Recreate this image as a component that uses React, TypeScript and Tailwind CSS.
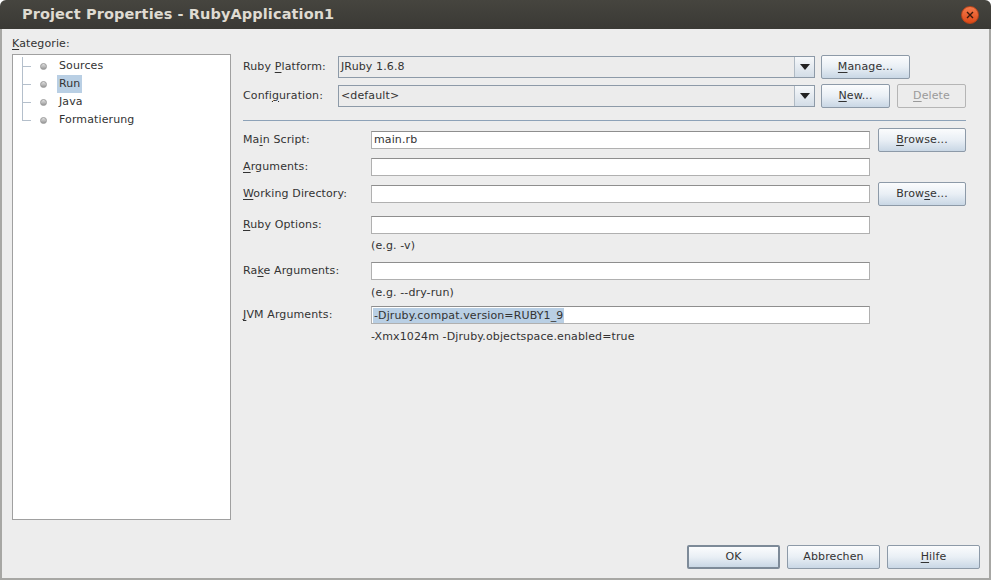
import React from "react";

const font = { fontFamily: '"DejaVu Sans", sans-serif', letterSpacing: "0.12px" };

function U({ children }: { children: React.ReactNode }) {
  return <span className="underline underline-offset-2">{children}</span>;
}

function Btn({ children, w, def, disabled }: { children: React.ReactNode; w: string; def?: boolean; disabled?: boolean }) {
  const base = "h-[24px] flex items-center justify-center text-[11px] rounded-[2px] shrink-0";
  if (disabled)
    return <div className={`${base} ${w} border border-[#b5b5b5] bg-[#ececec] text-[#9a9a9a]`}>{children}</div>;
  return (
    <div
      className={`${base} ${w} ${def ? "border-2 border-[#7d8a98]" : "border border-[#8d9aa8]"} bg-gradient-to-b from-[#fbfcfd] via-[#e9eff5] to-[#c9d7e5] text-[#333]`}
    >
      {children}
    </div>
  );
}

function Combo({ text }: { text: string }) {
  return (
    <div className="w-[477px] h-[22px] border border-[#8d9aa8] bg-[#ececec] flex items-center">
      <div className="flex-1 pl-[2px] text-[11px] text-[#333]">{text}</div>
      <div className="w-[20px] h-full border-l border-[#b0bac4] bg-gradient-to-b from-[#f6f8fa] to-[#d3dde7] flex items-center justify-center">
        <svg width="10" height="6" viewBox="0 0 10 6"><path d="M0 0 H10 L5 6 Z" fill="#222" /></svg>
      </div>
    </div>
  );
}

function Field({ value, selected }: { value?: string; selected?: boolean }) {
  return (
    <div className="w-[499px] h-[18px] bg-white border border-[#b0b0b0] border-t-[#8e8e8e] flex items-center text-[11px] text-[#333] pl-[1px]">
      {value && (selected ? <span className="bg-[#b9cfe4] leading-[15px] px-[1px]">{value}</span> : <span className="pl-[1px]">{value}</span>)}
    </div>
  );
}

function Row({ label, mt, children, browse }: { label: React.ReactNode; mt: string; children: React.ReactNode; browse?: React.ReactNode }) {
  return (
    <div className={`flex items-center h-[24px] ${mt}`}>
      <div className="w-[128px] text-[11px] text-[#333]">{label}</div>
      {children}
      {browse && <div className="ml-[8px]">{browse}</div>}
    </div>
  );
}

function Hint({ text, mt }: { text: string; mt: string }) {
  return <div className={`h-[18px] flex items-center pl-[128px] text-[11px] text-[#333] ${mt}`}>{text}</div>;
}

function TreeItem({ text, selected, last }: { text: string; selected?: boolean; last?: boolean }) {
  return (
    <div className="relative h-[18px] flex items-center">
      <div className={`absolute left-[8px] top-0 w-[1px] bg-[#b4bfcb] ${last ? "h-[9px]" : "h-[18px]"}`} />
      <div className="absolute left-[8px] top-[9px] w-[9px] h-[1px] bg-[#b4bfcb]" />
      <div className="ml-[26px] w-[7px] h-[7px] rounded-full bg-gradient-to-b from-[#e0e0e0] to-[#9a9a9a] border border-[#999]" />
      <div className={`ml-[10px] text-[11px] text-[#333] px-[2px] leading-[18px] ${selected ? "bg-[#b9cfe4]" : ""}`}>{text}</div>
    </div>
  );
}

export default function App() {
  return (
    <div className="w-[991px] h-[580px] bg-white overflow-hidden" style={font}>
      <div className="h-[29px] bg-gradient-to-b from-[#46453f] to-[#3a3935] rounded-t-[6px] flex items-center justify-between px-[22px]">
        <div className="text-[14.5px] font-bold text-[#dfdbd2] tracking-[0.1px]">Project Properties - RubyApplication1</div>
        <div className="w-[18px] h-[18px] rounded-full bg-gradient-to-b from-[#f47a4a] to-[#dd4814] flex items-center justify-center mr-[-10px] border border-[#b8441a]">
          <svg width="8" height="8" viewBox="0 0 8 8"><path d="M1 1 L7 7 M7 1 L1 7" stroke="#3a1a0c" strokeWidth="1.4" /></svg>
        </div>
      </div>
      <div className="h-[551px] bg-[#ededed] border-l-2 border-r-2 border-b-2 border-[#a7a7a4] flex flex-col">
        <div className="flex flex-1">
          <div className="pl-[10px] w-[231px] shrink-0">
            <div className="mt-[8px] h-[14px] flex items-center text-[11px] text-[#333]"><span><U>K</U>ategorie:</span></div>
            <div className="mt-[3px] w-[219px] h-[466px] bg-white border border-[#a0a0a0] pt-[2px] pl-[1px]">
              <TreeItem text="Sources" />
              <TreeItem text="Run" selected />
              <TreeItem text="Java" />
              <TreeItem text="Formatierung" last />
            </div>
          </div>
          <div className="ml-[10px] w-[723px] flex flex-col">
            <div className="flex items-center h-[24px] mt-[26px]">
              <div className="w-[95px] text-[11px] text-[#333]">Ruby <U>P</U>latform:</div>
              <Combo text="JRuby 1.6.8" />
              <div className="ml-[6px]"><Btn w="w-[89px]"><span><U>M</U>anage...</span></Btn></div>
            </div>
            <div className="flex items-center h-[24px] mt-[5px]">
              <div className="w-[95px] text-[11px] text-[#333]">Confi<U>g</U>uration:</div>
              <Combo text="<default>" />
              <div className="ml-[6px]"><Btn w="w-[69px]"><span><U>N</U>ew...</span></Btn></div>
              <div className="ml-[7px]"><Btn w="w-[69px]" disabled><span><U>D</U>elete</span></Btn></div>
            </div>
            <div className="mt-[12px] h-[1px] w-[723px] bg-[#8da2b8]" />
            <Row mt="mt-[7px]" label={<span>Ma<U>i</U>n Script:</span>} browse={<Btn w="w-[88px]"><span><U>B</U>rowse...</span></Btn>}>
              <Field value="main.rb" />
            </Row>
            <Row mt="mt-[3px]" label={<span><U>A</U>rguments:</span>}>
              <Field />
            </Row>
            <Row mt="mt-[3px]" label={<span><U>W</U>orking Directory:</span>} browse={<Btn w="w-[88px]"><span>Brow<U>s</U>e...</span></Btn>}>
              <Field />
            </Row>
            <Row mt="mt-[7px]" label={<span><U>R</U>uby Options:</span>}>
              <Field />
            </Row>
            <Hint mt="mt-[0px]" text="(e.g. -v)" />
            <Row mt="mt-[4px]" label={<span>Ra<U>k</U>e Arguments:</span>}>
              <Field />
            </Row>
            <Hint mt="mt-[1px]" text="(e.g. --dry-run)" />
            <Row mt="mt-[1px]" label={<span><U>J</U>VM Arguments:</span>}>
              <Field value="-Djruby.compat.version=RUBY1_9" selected />
            </Row>
            <Hint mt="mt-[1px]" text="-Xmx1024m -Djruby.objectspace.enabled=true" />
          </div>
        </div>
        <div className="flex justify-end gap-[7px] pr-[9px] pb-[7px] h-[33px] items-start">
          <Btn w="w-[93px]" def>OK</Btn>
          <Btn w="w-[93px]">Abbrechen</Btn>
          <Btn w="w-[93px]"><span><U>H</U>ilfe</span></Btn>
        </div>
      </div>
    </div>
  );
}
